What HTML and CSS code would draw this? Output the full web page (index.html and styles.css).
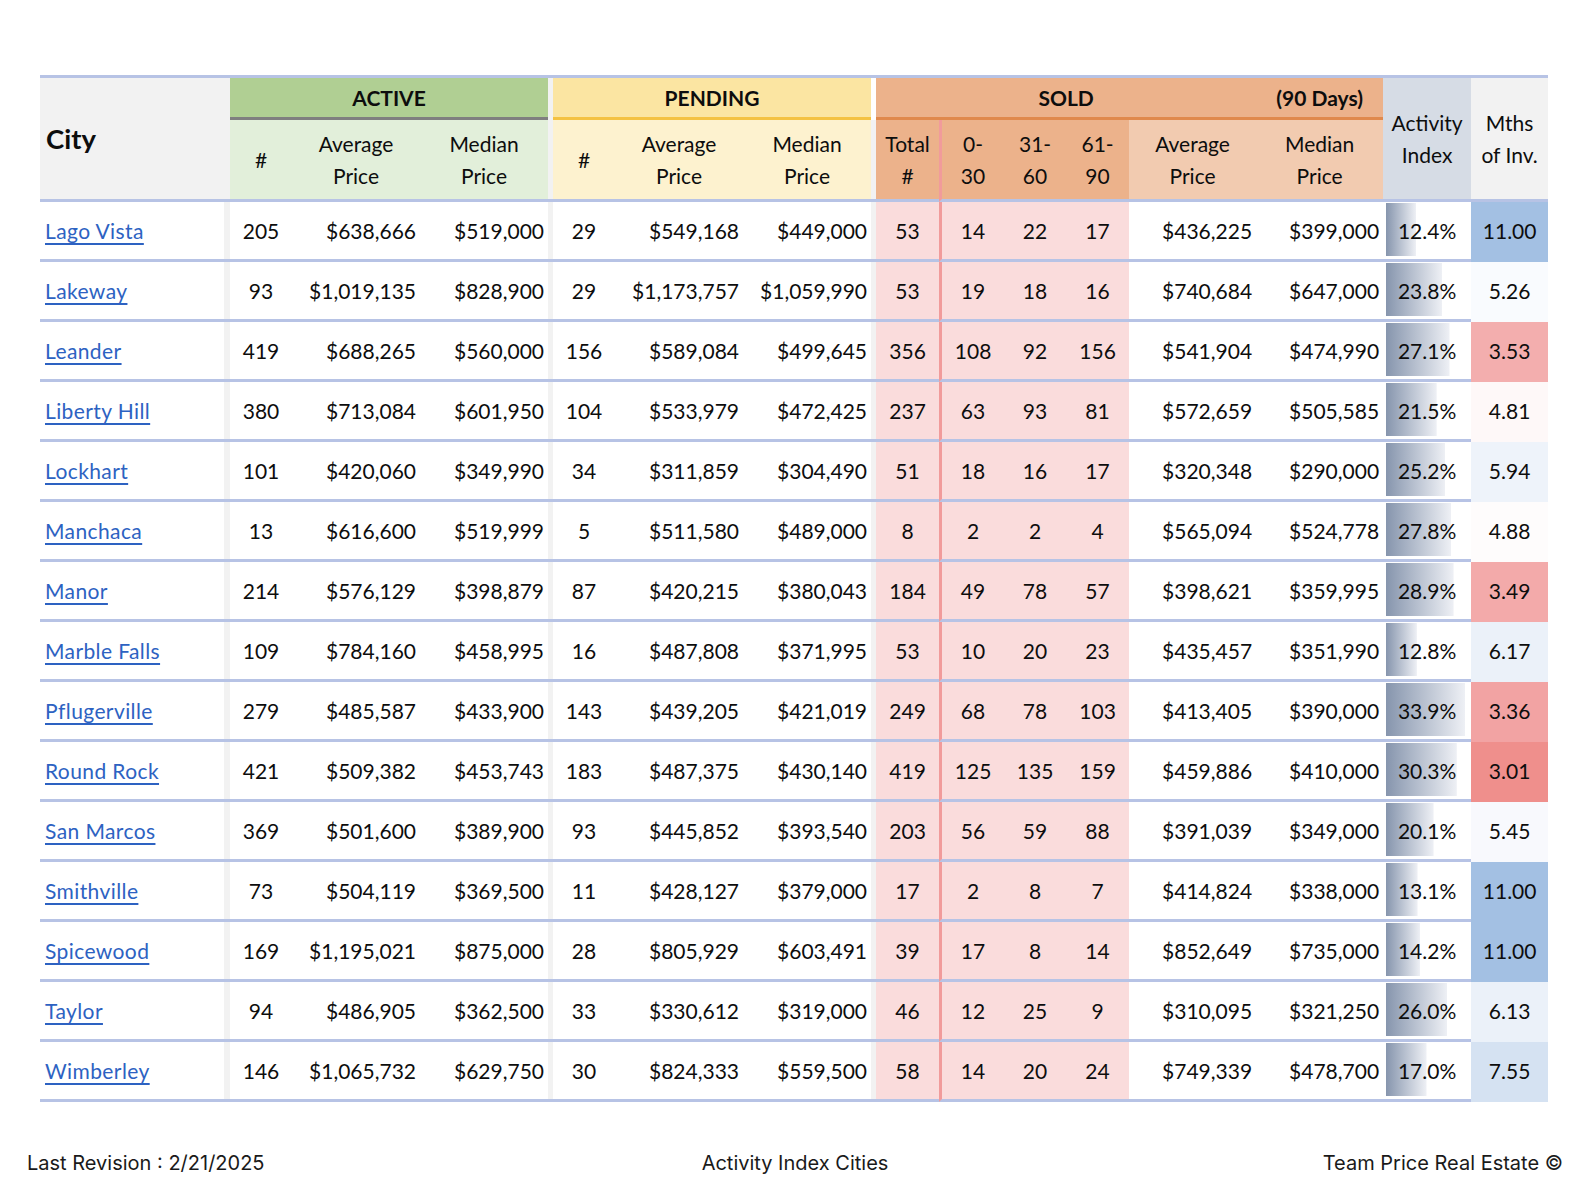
FILE: index.html
```html
<!DOCTYPE html>
<html lang="en">
<head>
<meta charset="utf-8">
<title>Activity Index Cities</title>
<link rel="stylesheet" href="styles.css">
</head>
<body>
<div class="page">
<table class="report">
  <colgroup>
    <col class="c-city"><col class="c-sep1">
    <col class="c-num"><col class="c-price"><col class="c-price">
    <col class="c-sep">
    <col class="c-num"><col class="c-price"><col class="c-price">
    <col class="c-sep">
    <col class="c-total"><col class="c-d1"><col class="c-d2"><col class="c-d3">
    <col class="c-sprice"><col class="c-sprice">
    <col class="c-act"><col class="c-mths">
  </colgroup>
  <thead>
    <tr>
      <th class="h-city" colspan="2" rowspan="2">City</th>
      <th class="band band-active" colspan="3">ACTIVE</th>
      <th class="h-sep" rowspan="2"></th>
      <th class="band band-pending" colspan="3">PENDING</th>
      <th class="h-sep h-sep-white" rowspan="2"></th>
      <th class="band band-sold" colspan="5">SOLD</th>
      <th class="band band-sold">(90 Days)</th>
      <th class="h-act" rowspan="2">Activity<br>Index</th>
      <th class="h-mths" rowspan="2">Mths<br>of Inv.</th>
    </tr>
    <tr>
      <th class="sub sub-active">#</th>
      <th class="sub sub-active">Average<br>Price</th>
      <th class="sub sub-active">Median<br>Price</th>
      <th class="sub sub-pending">#</th>
      <th class="sub sub-pending">Average<br>Price</th>
      <th class="sub sub-pending">Median<br>Price</th>
      <th class="sub sub-sold">Total<br>#</th>
      <th class="sub sub-sold split">0-<br>30</th>
      <th class="sub sub-sold">31-<br>60</th>
      <th class="sub sub-sold">61-<br>90</th>
      <th class="sub sub-sold-price">Average<br>Price</th>
      <th class="sub sub-sold-price">Median<br>Price</th>
    </tr>
  </thead>
  <tbody>
    <tr><td class="city"><a href="#">Lago Vista</a></td><td class="sep"></td><td class="num">205</td><td class="price">$638,666</td><td class="price">$519,000</td><td class="sep"></td><td class="num">29</td><td class="price">$549,168</td><td class="price">$449,000</td><td class="sep"></td><td class="num sold">53</td><td class="num sold split">14</td><td class="num sold">22</td><td class="num sold">17</td><td class="price">$436,225</td><td class="price">$399,000</td><td class="act" style="--w:30px">12.4%</td><td class="mths" style="background:#a3c0e3">11.00</td></tr>
    <tr><td class="city"><a href="#">Lakeway</a></td><td class="sep"></td><td class="num">93</td><td class="price">$1,019,135</td><td class="price">$828,900</td><td class="sep"></td><td class="num">29</td><td class="price">$1,173,757</td><td class="price">$1,059,990</td><td class="sep"></td><td class="num sold">53</td><td class="num sold split">19</td><td class="num sold">18</td><td class="num sold">16</td><td class="price">$740,684</td><td class="price">$647,000</td><td class="act" style="--w:56px">23.8%</td><td class="mths" style="background:#f9fbfe">5.26</td></tr>
    <tr><td class="city"><a href="#">Leander</a></td><td class="sep"></td><td class="num">419</td><td class="price">$688,265</td><td class="price">$560,000</td><td class="sep"></td><td class="num">156</td><td class="price">$589,084</td><td class="price">$499,645</td><td class="sep"></td><td class="num sold">356</td><td class="num sold split">108</td><td class="num sold">92</td><td class="num sold">156</td><td class="price">$541,904</td><td class="price">$474,990</td><td class="act" style="--w:63.5px">27.1%</td><td class="mths" style="background:#f3aeae">3.53</td></tr>
    <tr><td class="city"><a href="#">Liberty Hill</a></td><td class="sep"></td><td class="num">380</td><td class="price">$713,084</td><td class="price">$601,950</td><td class="sep"></td><td class="num">104</td><td class="price">$533,979</td><td class="price">$472,425</td><td class="sep"></td><td class="num sold">237</td><td class="num sold split">63</td><td class="num sold">93</td><td class="num sold">81</td><td class="price">$572,659</td><td class="price">$505,585</td><td class="act" style="--w:50.7px">21.5%</td><td class="mths" style="background:#fef8f8">4.81</td></tr>
    <tr><td class="city"><a href="#">Lockhart</a></td><td class="sep"></td><td class="num">101</td><td class="price">$420,060</td><td class="price">$349,990</td><td class="sep"></td><td class="num">34</td><td class="price">$311,859</td><td class="price">$304,490</td><td class="sep"></td><td class="num sold">51</td><td class="num sold split">18</td><td class="num sold">16</td><td class="num sold">17</td><td class="price">$320,348</td><td class="price">$290,000</td><td class="act" style="--w:59.2px">25.2%</td><td class="mths" style="background:#eef3fa">5.94</td></tr>
    <tr><td class="city"><a href="#">Manchaca</a></td><td class="sep"></td><td class="num">13</td><td class="price">$616,600</td><td class="price">$519,999</td><td class="sep"></td><td class="num">5</td><td class="price">$511,580</td><td class="price">$489,000</td><td class="sep"></td><td class="num sold">8</td><td class="num sold split">2</td><td class="num sold">2</td><td class="num sold">4</td><td class="price">$565,094</td><td class="price">$524,778</td><td class="act" style="--w:65.1px">27.8%</td><td class="mths" style="background:#fefcfc">4.88</td></tr>
    <tr><td class="city"><a href="#">Manor</a></td><td class="sep"></td><td class="num">214</td><td class="price">$576,129</td><td class="price">$398,879</td><td class="sep"></td><td class="num">87</td><td class="price">$420,215</td><td class="price">$380,043</td><td class="sep"></td><td class="num sold">184</td><td class="num sold split">49</td><td class="num sold">78</td><td class="num sold">57</td><td class="price">$398,621</td><td class="price">$359,995</td><td class="act" style="--w:67.6px">28.9%</td><td class="mths" style="background:#f3aaaa">3.49</td></tr>
    <tr><td class="city"><a href="#">Marble Falls</a></td><td class="sep"></td><td class="num">109</td><td class="price">$784,160</td><td class="price">$458,995</td><td class="sep"></td><td class="num">16</td><td class="price">$487,808</td><td class="price">$371,995</td><td class="sep"></td><td class="num sold">53</td><td class="num sold split">10</td><td class="num sold">20</td><td class="num sold">23</td><td class="price">$435,457</td><td class="price">$351,990</td><td class="act" style="--w:30.9px">12.8%</td><td class="mths" style="background:#ebf1f9">6.17</td></tr>
    <tr><td class="city"><a href="#">Pflugerville</a></td><td class="sep"></td><td class="num">279</td><td class="price">$485,587</td><td class="price">$433,900</td><td class="sep"></td><td class="num">143</td><td class="price">$439,205</td><td class="price">$421,019</td><td class="sep"></td><td class="num sold">249</td><td class="num sold split">68</td><td class="num sold">78</td><td class="num sold">103</td><td class="price">$413,405</td><td class="price">$390,000</td><td class="act" style="--w:79px">33.9%</td><td class="mths" style="background:#f2a3a3">3.36</td></tr>
    <tr><td class="city"><a href="#">Round Rock</a></td><td class="sep"></td><td class="num">421</td><td class="price">$509,382</td><td class="price">$453,743</td><td class="sep"></td><td class="num">183</td><td class="price">$487,375</td><td class="price">$430,140</td><td class="sep"></td><td class="num sold">419</td><td class="num sold split">125</td><td class="num sold">135</td><td class="num sold">159</td><td class="price">$459,886</td><td class="price">$410,000</td><td class="act" style="--w:70.8px">30.3%</td><td class="mths" style="background:#ef8f8c">3.01</td></tr>
    <tr><td class="city"><a href="#">San Marcos</a></td><td class="sep"></td><td class="num">369</td><td class="price">$501,600</td><td class="price">$389,900</td><td class="sep"></td><td class="num">93</td><td class="price">$445,852</td><td class="price">$393,540</td><td class="sep"></td><td class="num sold">203</td><td class="num sold split">56</td><td class="num sold">59</td><td class="num sold">88</td><td class="price">$391,039</td><td class="price">$349,000</td><td class="act" style="--w:47.6px">20.1%</td><td class="mths" style="background:#f8f9fd">5.45</td></tr>
    <tr><td class="city"><a href="#">Smithville</a></td><td class="sep"></td><td class="num">73</td><td class="price">$504,119</td><td class="price">$369,500</td><td class="sep"></td><td class="num">11</td><td class="price">$428,127</td><td class="price">$379,000</td><td class="sep"></td><td class="num sold">17</td><td class="num sold split">2</td><td class="num sold">8</td><td class="num sold">7</td><td class="price">$414,824</td><td class="price">$338,000</td><td class="act" style="--w:31.6px">13.1%</td><td class="mths" style="background:#a3c0e3">11.00</td></tr>
    <tr><td class="city"><a href="#">Spicewood</a></td><td class="sep"></td><td class="num">169</td><td class="price">$1,195,021</td><td class="price">$875,000</td><td class="sep"></td><td class="num">28</td><td class="price">$805,929</td><td class="price">$603,491</td><td class="sep"></td><td class="num sold">39</td><td class="num sold split">17</td><td class="num sold">8</td><td class="num sold">14</td><td class="price">$852,649</td><td class="price">$735,000</td><td class="act" style="--w:34.1px">14.2%</td><td class="mths" style="background:#a3c0e3">11.00</td></tr>
    <tr><td class="city"><a href="#">Taylor</a></td><td class="sep"></td><td class="num">94</td><td class="price">$486,905</td><td class="price">$362,500</td><td class="sep"></td><td class="num">33</td><td class="price">$330,612</td><td class="price">$319,000</td><td class="sep"></td><td class="num sold">46</td><td class="num sold split">12</td><td class="num sold">25</td><td class="num sold">9</td><td class="price">$310,095</td><td class="price">$321,250</td><td class="act" style="--w:61px">26.0%</td><td class="mths" style="background:#ebf1f9">6.13</td></tr>
    <tr><td class="city"><a href="#">Wimberley</a></td><td class="sep"></td><td class="num">146</td><td class="price">$1,065,732</td><td class="price">$629,750</td><td class="sep"></td><td class="num">30</td><td class="price">$824,333</td><td class="price">$559,500</td><td class="sep"></td><td class="num sold">58</td><td class="num sold split">14</td><td class="num sold">20</td><td class="num sold">24</td><td class="price">$749,339</td><td class="price">$478,700</td><td class="act" style="--w:40.5px">17.0%</td><td class="mths" style="background:#d5e2f2">7.55</td></tr>
  </tbody>
</table>
<footer class="footer">
  <span class="f-left">Last Revision : 2/21/2025</span>
  <span class="f-center">Activity Index Cities</span>
  <span class="f-right">Team Price Real Estate ©</span>
</footer>
</div>
</body>
</html>
```

FILE: styles.css
```css
html, body {
  margin: 0;
  padding: 0;
  background: #ffffff;
}

.page {
  padding-top: 75px;
}

.report {
  margin-left: 40px;
  width: 1508px;
  table-layout: fixed;
  border-collapse: separate;
  border-spacing: 0;
  border-top: 3px solid #b7c3e5;
  font-family: Lato, "Liberation Sans", sans-serif;
  font-size: 21px;
  color: #0d0d0d;
}

.c-city { width: 184px; }
.c-sep1 { width: 6px; }
.c-num { width: 62px; }
.c-price { width: 128px; }
.c-sep { width: 5px; }
.c-total { width: 63px; }
.c-d1 { width: 65px; }
.c-d2 { width: 62px; }
.c-d3 { width: 63px; }
.c-sprice { width: 127px; }
.c-act { width: 88px; }
.c-mths { width: 77px; }

.report th,
.report td {
  padding: 0;
  text-align: center;
  vertical-align: middle;
}

/* header */
.report th {
  font-weight: 400;
  line-height: 32px;
}

.h-city {
  background: #f2f2f2;
  text-align: left !important;
  padding-left: 6px !important;
  font-size: 27.5px;
  font-weight: 700 !important;
  border-bottom: 3px solid #b7c3e5;
}

.band {
  height: 39px;
  font-weight: 700 !important;
  font-size: 21px;
  line-height: 37px !important;
}

.band-active {
  background: #b0cf93;
  border-bottom: 3px solid #7f7f7f;
}

.band-pending {
  background: #fbe5a2;
  border-bottom: 3px solid #f4c242;
}

.band-sold {
  background: #ecb28b;
  border-bottom: 3px solid #e0894c;
}

.h-sep {
  background: #f2f2f2;
  border-bottom: 3px solid #b7c3e5;
}

.h-sep-white {
  background: linear-gradient(#ffffff 42px, #f2f2f2 42px);
}

.h-act {
  background: #d6dce5;
  border-bottom: 3px solid #b7c3e5;
}

.h-mths {
  background: #f2f2f2;
  border-bottom: 3px solid #b7c3e5;
}

.sub {
  height: 79px;
  border-bottom: 3px solid #b7c3e5;
}

.sub-active { background: #e2efda; }
.sub-pending { background: #fdf2cf; }
.sub-sold { background: #ecb28b; }
.sub-sold-price { background: #f2cbb0; }

/* body */
.report tbody td {
  height: 57px;
  border-bottom: 3px solid #b7c3e5;
  white-space: nowrap;
}

.report tbody td.mths {
  border-bottom: 3px solid transparent;
}

.report td.city {
  text-align: left;
  padding-left: 5px;
}

.city a {
  color: #2d62c2;
  letter-spacing: 0.4px;
  text-decoration: underline;
  text-decoration-thickness: 2px;
  text-underline-offset: 4px;
}

.report td.sep {
  background: #f2f2f2;
}

.report td.price {
  text-align: right;
  padding-right: 4px;
}

.report td.sold {
  background: #fadcdc;
}

.report .split {
  border-left: 3px solid #f19b9b;
}

.report td.act {
  background-image: linear-gradient(to right, #8695ad, #eef0f5);
  background-repeat: no-repeat;
  background-position: 3px 1px;
  background-size: var(--w) 53px;
}

/* footer */
.footer {
  display: grid;
  grid-template-columns: 1fr auto 1fr;
  align-items: center;
  margin-top: 49px;
  padding: 0 19px 0 27px;
  font-family: Inter, "Noto Sans", sans-serif;
  font-size: 20px;
  letter-spacing: 0;
  line-height: 24px;
  color: #1a1a1a;
}

.f-left { justify-self: start; }
.f-center { justify-self: center; }
.f-right { justify-self: end; }
```
